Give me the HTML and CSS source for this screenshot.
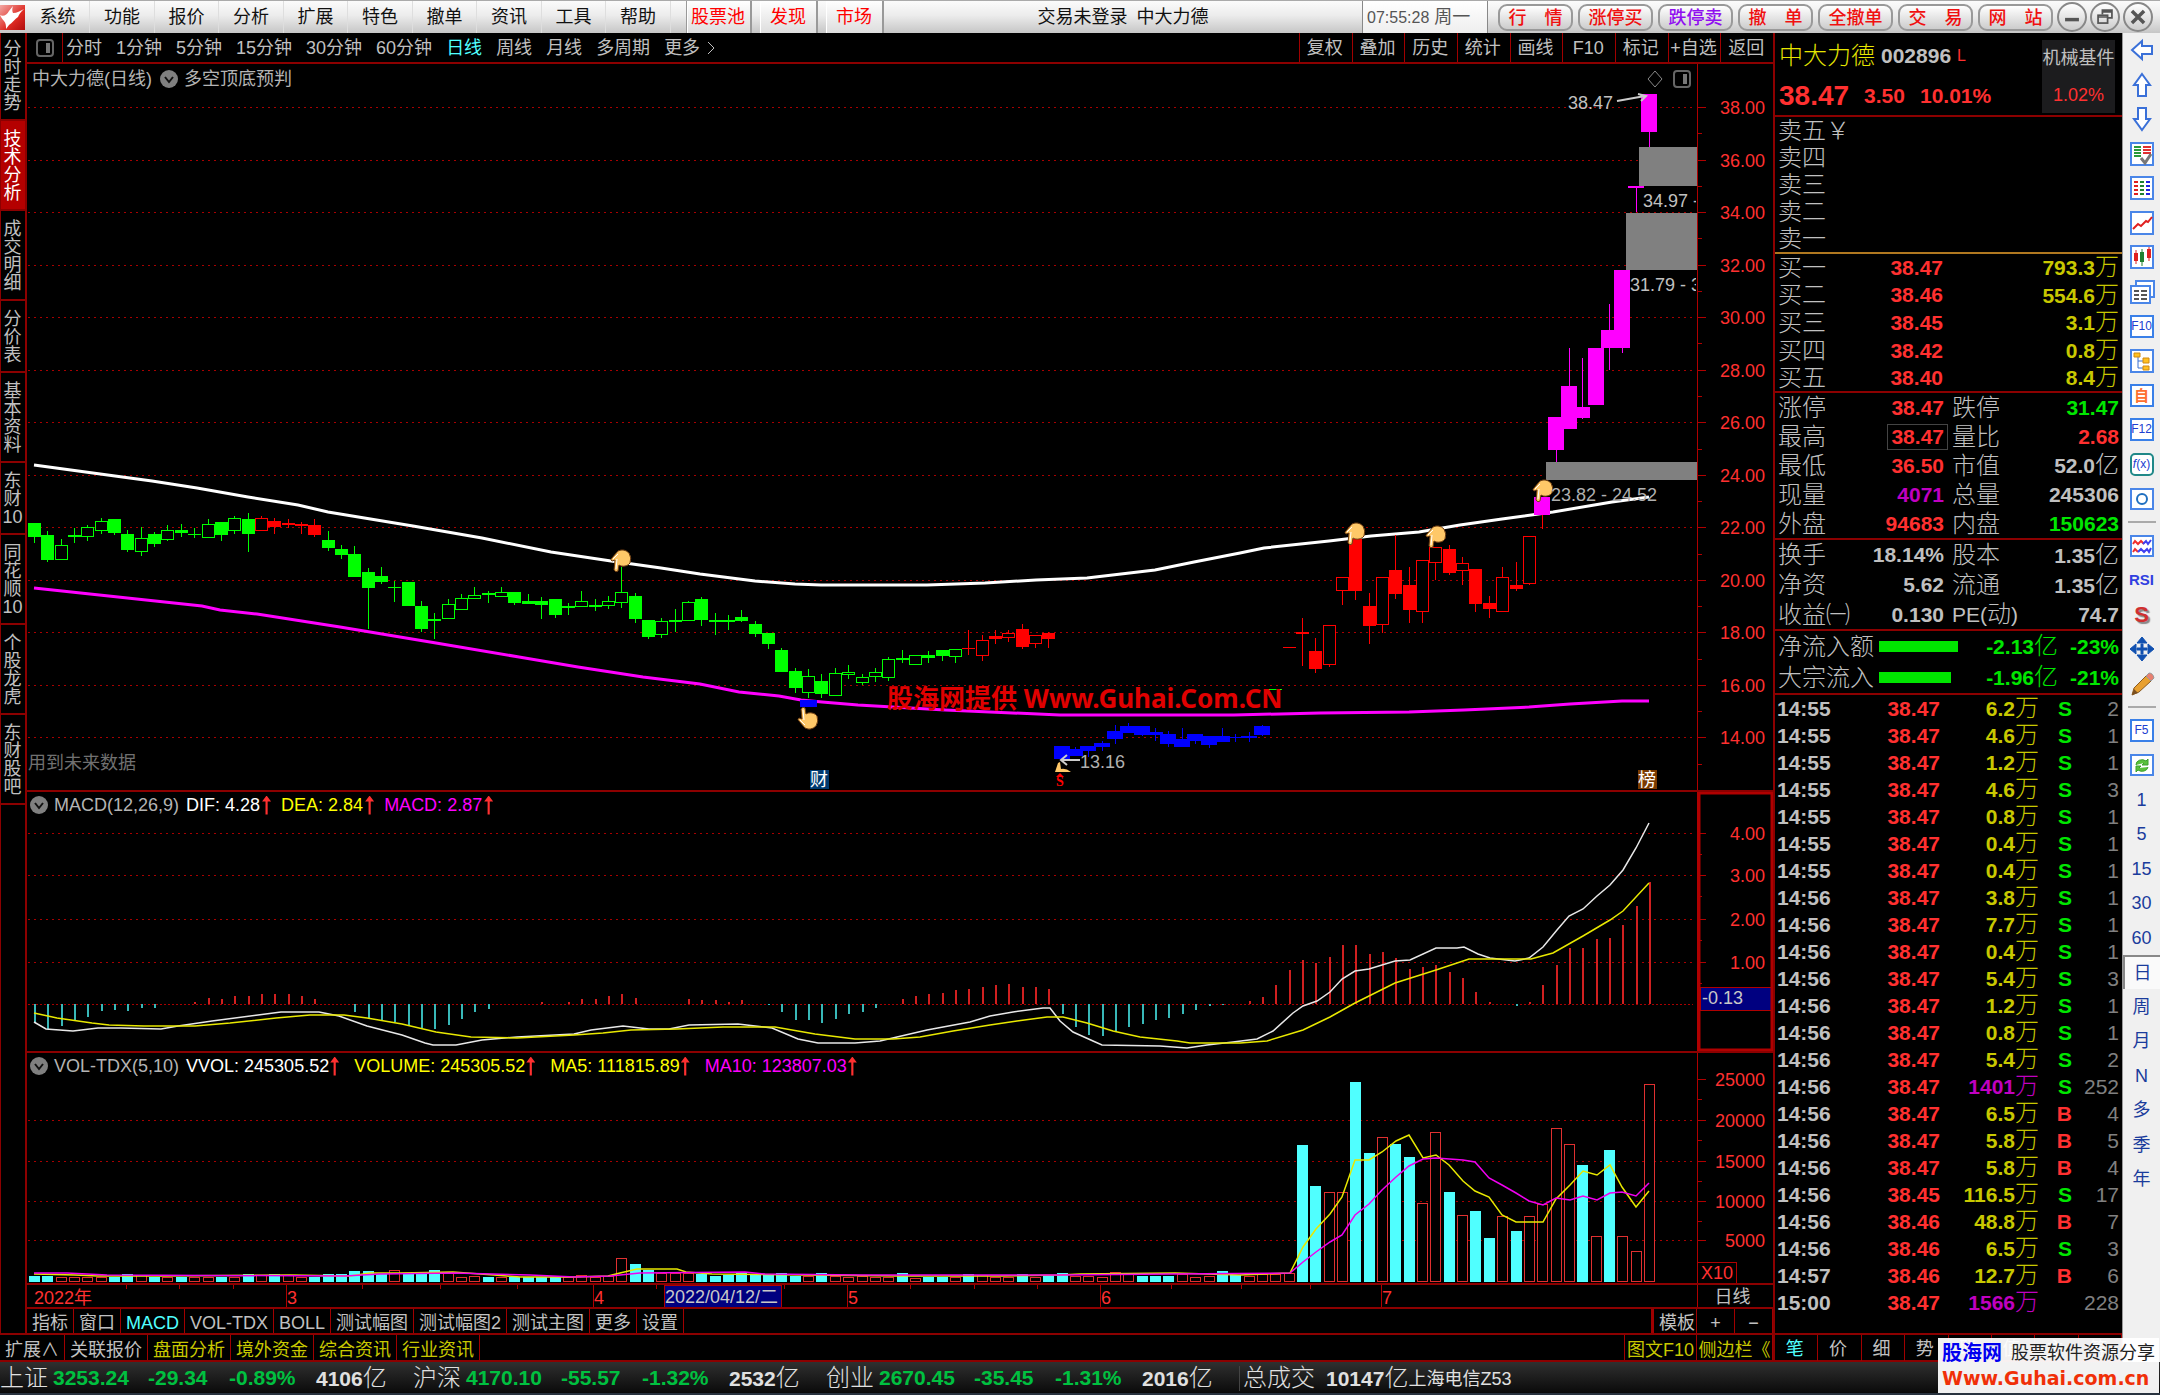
FILE: index.html
```html
<!DOCTYPE html>
<html lang="zh-CN">
<head>
<meta charset="utf-8">
<title>中大力德 002896</title>
<link rel="stylesheet" href="styles.css">
</head>
<body>
<header class="menubar">
  <svg class="logo" viewBox="0 0 25 25" aria-hidden="true"><defs><linearGradient id="lg" x1="0" y1="0" x2="1" y2="1"><stop offset="0" stop-color="#f3a9a4"/><stop offset=".6" stop-color="#dd2a22"/><stop offset="1" stop-color="#b00d0d"/></linearGradient></defs><rect width="25" height="25" fill="url(#lg)"/><path d="M0 10C3 12 7 10 9 6L13 1C12 4 12 6 13 8C17 8 20 6 24 4C21 7 19 9 18 12C15 14 12 18 9 20C8 21 7 23 6 24C6 21 6 18 4 16C2 14 1 12 0 10Z" fill="#fff"/></svg>
  <nav class="menu">
    <button>系统</button><button>功能</button><button>报价</button><button>分析</button><button>扩展</button><button>特色</button><button>撤单</button><button>资讯</button><button>工具</button><button>帮助</button>
  </nav>
  <nav class="hot"><button>股票池</button><button>发现</button><button>市场</button></nav>
  <h1 class="title">交易未登录&ensp;中大力德</h1>
  <time class="clock"><span>07:55:28</span> 周一</time>
  <div class="trade">
    <button>行　情</button><button>涨停买</button><button class="violet">跌停卖</button><button>撤　单</button><button>全撤单</button><button>交　易</button><button>网　站</button>
  </div>
  <div class="winctl">
    <button aria-label="最小化"><svg viewBox="0 0 30 30"><path d="M7 18H23" stroke="#555" stroke-width="4"/></svg></button>
    <button aria-label="还原"><svg viewBox="0 0 30 30" fill="none" stroke="#555" stroke-width="2"><path d="M12 12V7H23V16H18"/><rect x="7" y="13" width="11" height="9"/><path d="M12 9H23M7 15H18"/></svg></button>
    <button aria-label="关闭"><svg viewBox="0 0 30 30"><path d="M8 8L22 22M22 8L8 22" stroke="#555" stroke-width="4"/></svg></button>
  </div>
</header>

<main class="desk">
  <section class="left">
    <div class="work">
      <nav class="side">
        <button>分时走势</button><button class="on">技术分析</button><button>成交明细</button><button>分价表</button><button>基本资料</button><button>东财10</button><button>同花顺10</button><button>个股龙虎</button><button>东财股吧</button>
      </nav>
      <div class="charts">
        <div class="periods">
          <button class="pane" aria-label="布局"><svg viewBox="0 0 18 18"><rect x="1" y="1" width="16" height="16" rx="3" fill="none" stroke="#666" stroke-width="2"/><path d="M10 4H14V14H10Z" fill="#777"/></svg></button>
          <nav class="plist">
            <button>分时</button><button>1分钟</button><button>5分钟</button><button>15分钟</button><button>30分钟</button><button>60分钟</button><button class="on">日线</button><button>周线</button><button>月线</button><button>多周期</button><button>更多<svg viewBox="0 0 10 18"><path d="M2 3L8 9 2 15" fill="none" stroke="#c0c0c0" stroke-width="1"/></svg></button>
          </nav>
          <nav class="tools"><button>复权</button><button>叠加</button><button>历史</button><button>统计</button><button>画线</button><button>F10</button><button>标记</button><button>+自选</button><button>返回</button></nav>
        </div>
        <div class="panel" id="p-main">
          <svg class="plot"></svg>
          <div class="legend">
            <span>中大力德(日线)</span><svg class="drop" viewBox="0 0 18 18"><circle cx="9" cy="9" r="9" fill="#808080"/><path d="M5 7L9 12 13 7" fill="none" stroke="#111" stroke-width="2"/></svg><span>多空顶底预判</span>
            <svg class="rhomb" viewBox="0 0 44 20"><path d="M8 2L15 10 8 18 1 10Z" fill="none" stroke="#888"/><rect x="27" y="2" width="16" height="16" rx="3" fill="none" stroke="#666" stroke-width="2"/><path d="M36 5H40V15H36Z" fill="#777"/></svg>
          </div>
        </div>
        <div class="panel" id="p-macd">
          <svg class="plot"></svg>
          <div class="legend">
            <svg class="drop" viewBox="0 0 18 18"><circle cx="9" cy="9" r="9" fill="#808080"/><path d="M5 7L9 12 13 7" fill="none" stroke="#111" stroke-width="2"/></svg>
            <span>MACD(12,26,9)</span><span class="w up">DIF: 4.28</span><span class="y up">DEA: 2.84</span><span class="m up">MACD: 2.87</span>
          </div>
        </div>
        <div class="panel" id="p-vol">
          <svg class="plot"></svg>
          <div class="legend">
            <svg class="drop" viewBox="0 0 18 18"><circle cx="9" cy="9" r="9" fill="#808080"/><path d="M5 7L9 12 13 7" fill="none" stroke="#111" stroke-width="2"/></svg>
            <span>VOL-TDX(5,10)</span><span class="w up">VVOL: 245305.52</span><span class="y up">VOLUME: 245305.52</span><span class="y up">MA5: 111815.89</span><span class="m up">MA10: 123807.03</span>
          </div>
        </div>
        <div class="panel" id="p-time"><svg class="plot"></svg></div>
        <div class="indic">
          <button>指标</button><button>窗口</button><button class="on">MACD</button><button>VOL-TDX</button><button>BOLL</button><button>测试幅图</button><button>测试幅图2</button><button>测试主图</button><button>更多</button><button>设置</button>
          <span class="fill"></span>
          <button class="tpl">模板</button><button class="zoom">+</button><button class="zoom">−</button>
        </div>
      </div>
    </div>
    <div class="ext">
      <button class="grey">扩展∧</button><button class="grey">关联报价</button><button>盘面分析</button><button>境外资金</button><button>综合资讯</button><button>行业资讯</button>
      <span class="fill"></span>
      <button class="f10">图文F10</button><button class="bar">侧边栏《</button>
    </div>
  </section>

  <aside class="quote">
    <div class="head">
      <div class="name"><h2>中大力德</h2><b>002896</b><sup>L</sup></div>
      <div class="price"><strong>38.47</strong><b>3.50</b><b>10.01%</b></div>
      <div class="trend"><span>机械基件</span><span class="r">1.02%</span></div>
    </div>
    <table class="book sell">
      <tr><th>卖五￥</th></tr><tr><th>卖四</th></tr><tr><th>卖三</th></tr><tr><th>卖二</th></tr><tr><th>卖一</th></tr>
    </table>
    <table class="book buy">
      <tr><th>买一</th><td>38.47</td><td>793.3<i>万</i></td></tr>
      <tr><th>买二</th><td>38.46</td><td>554.6<i>万</i></td></tr>
      <tr><th>买三</th><td>38.45</td><td>3.1<i>万</i></td></tr>
      <tr><th>买四</th><td>38.42</td><td>0.8<i>万</i></td></tr>
      <tr><th>买五</th><td>38.40</td><td>8.4<i>万</i></td></tr>
    </table>
    <table class="stat">
      <tr><th>涨停</th><td class="r">38.47</td><th>跌停</th><td class="g">31.47</td></tr>
      <tr><th>最高</th><td class="r"><span class="boxed">38.47</span></td><th>量比</th><td class="r">2.68</td></tr>
      <tr><th>最低</th><td class="r">36.50</td><th>市值</th><td>52.0<i>亿</i></td></tr>
      <tr><th>现量</th><td class="p">4071</td><th>总量</th><td>245306</td></tr>
      <tr><th>外盘</th><td class="r">94683</td><th>内盘</th><td class="g">150623</td></tr>
    </table>
    <table class="stat fund">
      <tr><th>换手</th><td>18.14%</td><th>股本</th><td>1.35<i>亿</i></td></tr>
      <tr><th>净资</th><td>5.62</td><th>流通</th><td>1.35<i>亿</i></td></tr>
      <tr><th>收益㈠</th><td>0.130</td><th><b>PE(</b>动<b>)</b></th><td>74.7</td></tr>
    </table>
    <table class="flow">
      <tr><th>净流入额</th><td><span class="meter" style="width:79px"></span></td><td>-2.13<i>亿</i></td><td>-23%</td></tr>
      <tr><th>大宗流入</th><td><span class="meter" style="width:72px"></span></td><td>-1.96<i>亿</i></td><td>-21%</td></tr>
    </table>
    <table class="ticks"><tbody id="ticks"></tbody></table>
    <nav class="qtabs"><button class="on">笔</button><button>价</button><button>细</button><button>势</button><button>联</button><button>值</button><button>主</button><button>筹</button></nav>
  </aside>

  <nav class="rail">
    <button aria-label="后退"><svg viewBox="0 0 26 26"><path d="M3 13L13 4V9H23V17H13V22Z" class="arw"/></svg></button>
    <button aria-label="上"><svg viewBox="0 0 26 26"><path d="M13 2L21 13H17V24H9V13H5Z" class="arw"/></svg></button>
    <button aria-label="下"><svg viewBox="0 0 26 26"><path d="M13 24L21 13H17V2H9V13H5Z" class="arw"/></svg></button>
    <button aria-label="委托"><svg viewBox="0 0 26 26"><rect x="2" y="2" width="22" height="22" class="frm"/><path d="M5 6H12M5 9H12M5 12H12M5 15H12" stroke="#2a9a3a" stroke-width="2"/><path d="M14 6H22M14 9H22M14 12H22" stroke="#e03030" stroke-width="2"/><path d="M12 17L16 22 22 13" fill="none" stroke="#777" stroke-width="3"/></svg></button>
    <button aria-label="列表"><svg viewBox="0 0 26 26"><rect x="2" y="2" width="22" height="22" class="frm"/><g stroke-width="2"><path d="M5 7H9M5 11H9M5 15H9M5 19H9" stroke="#e02020"/><path d="M11 7H15M11 11H15M11 15H15M11 19H15" stroke="#208030"/><path d="M17 7H21M17 11H21M17 15H21M17 19H21" stroke="#2020e0"/></g></svg></button>
    <button aria-label="分时图"><svg viewBox="0 0 26 26"><rect x="2" y="2" width="22" height="22" class="frm"/><path d="M4 19L9 14 12 16 17 11 19 12 23 7" fill="none" stroke="#e02020" stroke-width="2"/></svg></button>
    <button aria-label="K线图"><svg viewBox="0 0 26 26"><rect x="2" y="2" width="22" height="22" class="frm"/><path d="M7 6V20M20 3V17" stroke="#e02020"/><path d="M5 9H9V17H5ZM18 5H22V14H18Z" fill="#e02020"/><path d="M13 5V22" stroke="#208030"/><path d="M11 8H15V18H11Z" fill="#208030"/></svg></button>
    <button aria-label="多窗口"><svg viewBox="0 0 26 26"><rect x="7" y="2" width="18" height="16" class="frm"/><rect x="2" y="7" width="19" height="17" class="frm"/><path d="M5 12H10M12 12H18M5 16H10M12 16H18M5 20H10M12 20H18" stroke="#555" stroke-width="2"/></svg></button>
    <button class="key"><span>F10</span></button>
    <button aria-label="结构"><svg viewBox="0 0 26 26"><rect x="2" y="2" width="22" height="22" class="frm"/><path d="M9 9V20H15M9 13H15" fill="none" stroke="#3a70d0"/><path d="M5 5H11V9H5ZM14 10H20V15H14ZM14 18H20V22H14Z" fill="#ffc020" stroke="#d08a10"/></svg></button>
    <button class="key orange"><span>自</span></button>
    <button class="key"><span>F12</span></button>
    <button class="key teal"><span><em>f</em>(x)</span></button>
    <button aria-label="圆"><svg viewBox="0 0 26 26"><rect x="2" y="3" width="22" height="20" class="frm"/><circle cx="13" cy="13" r="5" fill="none" stroke="#2070c0" stroke-width="2"/></svg></button>
    <hr>
    <button aria-label="叠加"><svg viewBox="0 0 26 26"><rect x="2" y="3" width="22" height="20" class="frm"/><path d="M4 11L6 8 9 11 12 8 15 11M4 19L6 16 9 19" fill="none" stroke="#f03030" stroke-width="2"/><path d="M14 11L17 8 19 11 22 7M9 19L12 16 15 19 18 16 20 19 22 15" fill="none" stroke="#4040f0" stroke-width="2"/></svg></button>
    <button class="rsi">RSI</button>
    <button class="dollar">S</button>
    <button aria-label="移动"><svg viewBox="0 0 26 26"><path d="M13 1L18 7H8ZM13 25L18 19H8ZM1 13L7 8V18ZM25 13L19 8V18ZM8 12H18V14H8ZM12 8H14V18H12Z" fill="#1050b0" stroke="#1050b0"/></svg></button>
    <button aria-label="画笔"><svg viewBox="0 0 26 26"><path d="M3 24L5 17 17 5 22 10 10 21Z" fill="#e8a030" stroke="#8a5a20"/><path d="M17 5L20 2Q24 2 25 7L22 10Z" fill="#e88070" stroke="#999"/><path d="M3 24L5 18 9 22Z" fill="#7a5020"/></svg></button>
    <hr>
    <button class="key"><span>F5</span></button>
    <button aria-label="刷新"><svg viewBox="0 0 26 26"><rect x="2" y="3" width="22" height="20" class="frm"/><path d="M7 13A6 5 0 0 1 17 9L19 7V13H13L15 11M19 15A6 5 0 0 1 9 18L7 20V14H12L10 16" fill="#5ac03a" stroke="#3aa02a"/></svg></button>
    <button>1</button><button>5</button><button>15</button><button>30</button><button>60</button><button class="on">日</button><button>周</button><button>月</button><button>N</button><button>多</button><button>季</button><button>年</button>
  </nav>
</main>

<footer class="status">
  <div class="idx"><span>上证</span><b>3253.24</b><b>-29.34</b><b>-0.89%</b><strong>4106<i>亿</i></strong></div>
  <div class="idx"><span>沪深</span><b>4170.10</b><b>-55.57</b><b>-1.32%</b><strong>2532<i>亿</i></strong></div>
  <div class="idx"><span>创业</span><b>2670.45</b><b>-35.45</b><b>-1.31%</b><strong>2016<i>亿</i></strong></div>
  <div class="total"><span>总成交</span><strong>10147<i>亿</i></strong></div>
  <span class="site">上海电信Z53</span>
</footer>
<div class="mark"><p><b>股海网</b><span>股票软件资源分享</span></p><a href="#">Www.Guhai.com.cn</a></div>
<script src="chart.js"></script>
</body>
</html>
```
FILE: styles.css
```css
* { box-sizing: border-box; }
body {
  margin: 0;
  min-height: 100vh;
  display: grid;
  grid-template-rows: 33px 1fr 33px;
  background: #000;
  color: #c0c0c0;
  font: 18px/24px "Liberation Sans", "Noto Sans CJK SC", sans-serif;
  white-space: nowrap;
}
button {
  margin: 0; padding: 0; border: 0; background: none; color: inherit;
  font: inherit; white-space: nowrap; border-radius: 0;
}
h1, h2, p { margin: 0; font-weight: 400; }
i { font-style: normal; font-weight: 300; font-size: 24px; }
.fill { flex: 1; }
.r { color: #ff3030; }
.g { color: #00e600; }
.p { color: #c000c0; }

/* menu bar */
.menubar {
  display: flex; align-items: center;
  background: linear-gradient(#fbfbfb, #ececec 45%, #c6c6c6);
  border-top: 1px solid #aaa;
  color: #111;
}
.logo { width: 25px; height: 25px; margin-right: 1px; }
.menu { display: flex; align-self: stretch; }
.menu button { width: 64px; border-right: 1px solid #dedede; }
.menu button:nth-child(even) { width: 65px; }
.hot { display: flex; align-self: stretch; gap: 8px; margin-left: 15px; border-left: 1px solid #999; }
.hot button { color: #f00; padding: 0 10px 0 9px; border-right: 2px solid #999; border-left: 1px solid #fff; background: linear-gradient(#fff, #ddd); }
.hot button:first-child { padding: 0 5px 0 3px; }
.title { flex: 1; font-size: 18px; text-align: center; }
.clock { width: 126px; align-self: stretch; line-height: 32px; padding-left: 4px; color: #555; border-left: 1px solid #888; border-right: 1px solid #888; background: linear-gradient(#fff, #eee); }
.clock span { font-size: 16px; }
.trade { display: flex; gap: 5px; margin-left: 10px; }
.trade button {
  width: 75px; height: 27px; line-height: 24px; color: #f01010; font-weight: 500;
  border: 2px solid #999; border-radius: 9px; background: linear-gradient(#fff, #ccc);
}
.trade .violet { color: #9010f0; }
.winctl { display: flex; gap: 3px; margin: 0 7px 0 4px; }
.winctl button { width: 30px; height: 30px; border: 2px solid #888; border-radius: 50%; background: linear-gradient(#fff, #ccc); }
.winctl svg { display: block; width: 26px; height: 26px; }

/* page frame */
.desk { display: grid; grid-template-columns: 1fr 350px 37px; min-height: 0; }
.left { display: flex; flex-direction: column; min-width: 0; }
.work { flex: 1; display: grid; grid-template-columns: 27px 1fr; }
.side { display: flex; flex-direction: column; border-right: 2px solid #8c0000; border-left: 1px solid #8c0000; border-bottom: 2px solid #8c0000; }
.side button {
  width: 24px; padding: 9px 2px 7px 1px; line-height: 18px; white-space: normal; word-break: break-all;
  border-bottom: 2px solid #8c0000;
}
.side button:first-child { padding-top: 7px; }
.side .on { background: #b40000; color: #fff; }
.charts { display: grid; grid-template-rows: 31px 728fr 261fr 232fr 24px 26px; min-width: 0; }
.periods { display: flex; border-bottom: 2px solid #8c0000; }
.pane { width: 36px; border-right: 1px solid #a00000; }
.pane svg { display: block; width: 18px; height: 18px; margin: 0 auto; }
.plist { display: flex; gap: 14px; padding-left: 3px; flex: 1; }
.plist .on, .indic .on, .qtabs .on { color: #50ffff; }
.plist svg { width: 10px; height: 18px; margin-left: 6px; vertical-align: -3px; }
.tools { display: grid; grid-template-columns: repeat(9, 1fr); width: 474px; }
.tools button { border-left: 1px solid #a00000; padding-right: 2px; }

/* chart panels: legend and plot share one grid cell */
.panel { display: grid; min-width: 0; border-bottom: 2px solid #8c0000; }
.panel > * { grid-area: 1 / 1; }
.plot { width: 100%; height: 0; min-height: 100%; overflow: hidden; }
.plot text { font-family: "Liberation Sans", "Noto Sans CJK SC", sans-serif; font-size: 18px; }
.plot .wm { font-family: "Noto Sans", "Noto Sans CJK SC", sans-serif; font-weight: 700; font-size: 26px; }
.plot .sell { font-family: "Liberation Serif", serif; font-weight: 700; font-size: 14px; }
.legend { display: flex; align-self: start; align-items: center; height: 26px; padding: 0 82px 0 3px; color: #b4b4b4; }
.drop { width: 18px; height: 18px; margin-right: 6px; }
#p-main .drop { margin: 0 6px 0 8px; }
#p-main .legend { padding-left: 5px; height: 30px; }
.rhomb { width: 44px; height: 20px; margin-left: auto; }
.w { color: #fff; }
.y { color: #ff0; }
.m { color: #f0f; }
.up { margin-left: 7px; display: flex; align-items: center; }
.up + .up { margin-left: 10px; }
#p-vol .up + .up { margin-left: 15px; }
.up::after {
  content: ""; width: 9px; height: 19px; margin-left: 2px; background: #ff3030;
  clip-path: polygon(50% 0, 100% 32%, 62% 32%, 62% 100%, 38% 100%, 38% 32%, 0 32%);
}
#p-vol .up::after { margin-left: 1px; }
.indic, .ext { display: flex; border-bottom: 2px solid #8c0000; }
.indic button { padding: 2px 5px 0; border-right: 1px solid #a00000; }
.indic .tpl { padding: 2px 7px 0 5px; border-left: 3px solid #a00000; width: 46px; }
.indic .zoom { width: 38px; }
.ext { height: 27px; color: #c8c800; }
.ext button { padding: 3px 5px 0; border-right: 1px solid #a00000; }
.ext .grey { color: #c0c0c0; }
.ext .f10 { border-left: 1px solid #a00000; padding: 3px 2px 0; }
.ext .bar { width: 76px; padding: 3px 0 0; }

/* quote panel */
.quote { display: flex; flex-direction: column; border-left: 2px solid #8c0000; border-right: 1px solid #999; }
.head {
  display: grid; grid-template-columns: 1fr 73px; grid-template-rows: 45px 35px; height: 84px;
  padding-right: 7px; border-bottom: 2px solid #8c0000; color: #c0c0c0;
}
.name { display: flex; align-items: center; padding-left: 4px; gap: 6px; }
.name h2 { font-size: 24px; color: #e6e600; font-weight: 300; }
.name b, .price b { font-size: 21px; }
.name sup { color: #ff3030; font-size: 16px; line-height: 16px; }
.price { grid-column: 1; display: flex; align-items: center; gap: 15px; padding-left: 4px; color: #ff3030; }
.price strong { font-size: 28px; }
.trend { grid-column: 2; grid-row: 1 / 3; margin-top: 7px; display: flex; flex-direction: column; justify-content: space-around; text-align: center; background: #1c1c1e; }
table { border-collapse: collapse; table-layout: fixed; width: 100%; font-size: 21px; font-weight: 700; line-height: 24px; }
th { font-size: 24px; font-weight: 300; text-align: left; padding: 0 0 0 3px; }
th b { font-size: 21px; }
td { text-align: right; padding: 0 3px 0 0; }
.book tr { height: 27px; }
.sell { border-bottom: 2px solid #b07820; height: 137px; }
.buy { border-bottom: 2px solid #8c0000; height: 139px; }
.buy th { width: 100px; }
.buy td:nth-child(2) { width: 71px; color: #ff3030; }
.buy td:nth-child(3) { color: #c8c800; }
.stat { border-bottom: 2px solid #8c0000; height: 147px; }
.stat tr, .flow tr { height: 29px; }
.stat th { width: 74px; overflow: visible; }
.stat td:nth-child(2) { width: 98px; }
.fund { height: 91px; }
.fund th { width: 84px; }
.fund td:nth-child(2) { width: 88px; }
.fund th:nth-child(3) { width: 84px; }
.boxed { display: inline-block; margin: 0 -4px 0 0; padding: 0 3px; border: 1px solid #444; }
.stat th:nth-child(3) { padding-left: 5px; }
.flow { border-bottom: 2px solid #8c0000; height: 64px; color: #00e600; }
.flow th { width: 104px; color: #c0c0c0; }
.flow td:nth-child(2) { width: 80px; text-align: left; }
.flow td:nth-child(3) { width: 102px; }
.meter { display: block; height: 11px; background: #00e600; }
.ticks tr { height: 27px; }
.ticks td:nth-child(1) { width: 76px; text-align: left; padding-left: 2px; }
.ticks td:nth-child(2) { width: 92px; color: #ff3030; }
.ticks td:nth-child(3) { width: 99px; color: #c8c800; }
.ticks td:nth-child(4) { width: 33px; }
.ticks td:nth-child(5) { color: #808080; font-weight: 400; }
.ticks td.p { color: #c000c0; }
.qtabs { display: grid; grid-template-columns: repeat(8, 1fr); height: 29px; margin-top: auto; border-top: 2px solid #8c0000; border-bottom: 2px solid #8c0000; }
.qtabs button { border-right: 1px solid #a00000; padding: 2px 3px 0 0; }

/* icon rail */
.rail { display: flex; flex-direction: column; background: #f0f0f0; color: #1a3c9c; }
.rail button { height: 34px; flex: none; display: grid; place-items: center; }
.rail button:nth-child(even) { height: 35px; }
.rail svg { width: 26px; height: 26px; }
.rail hr { width: 28px; height: 2px; margin: 5px auto; border: 0; background: #aaa; }
.arw { fill: #fff; stroke: #3a70d8; stroke-width: 2; }
.frm { fill: #fff; stroke: #4a86e8; stroke-width: 2; }
.key span { width: 24px; height: 23px; border: 2px solid #3a80e8; background: #fff; font-size: 12px; line-height: 19px; color: #2040d0; display: grid; justify-content: center; }
.orange span { color: #ff7030; font-weight: 700; font-size: 15px; }
.teal span { border-color: #208888; border-radius: 5px; display: flex; }
.rail .rsi { font-weight: 700; font-size: 15px; color: #3040e0; }
.rail .dollar { font-weight: 700; font-size: 22px; color: #d03030; text-shadow: 2px 2px 1px #888; }
.rail .on { background: #fafafa; border-left: 2px solid #888; border-top: 2px solid #888; }

/* status bar */
.status { display: flex; align-items: center; padding-top: 2px; background: linear-gradient(#303030, #0a0a0a); border-bottom: 2px solid #28323e; font-size: 21px; color: #e0e0e0; }
.idx { display: grid; grid-template-columns: 53px 95px 81px 87px 97px; }
.idx span, .total span { font-size: 24px; font-weight: 300; }
.idx b { color: #00c040; }
.total { display: flex; gap: 11px; border-left: 1px solid #444; padding-left: 3px; }
.site { font-size: 18px; }

/* brand stamp over the lower right corner */
.mark { position: absolute; right: 1px; bottom: 2px; width: 221px; height: 55px; padding: 3px 4px 0; background: rgba(255, 255, 255, .94); color: #222; }
.mark p { display: flex; justify-content: space-between; font-size: 18px; line-height: 25px; }
.mark b { color: #0000f0; font-size: 20px; }
.mark a { display: block; color: #f03008; text-decoration: none; font: 700 19px/24px "DejaVu Sans", sans-serif; }
```
FILE: chart.js
```js
// Series are stored in the 1671-wide drawing space of the plot; every panel
// scales them to the size it has in the window.
const LEFT = 27, PLOT = 1671, AXIS = 75, STEP = 13.347, FIRST = 34;
const RED = '#b00000', LABEL = '#ff3030';

// kind, high, body top, body bottom, low
// G/H green solid/hollow, R/O red solid/hollow, B blue, M magenta
const candles = `G523,523,537,543 G531,535,560,562 H539,545,559,559 G528,535,537,543 H525,527,536,541 H518,521,530,534
G519,519,533,535 G530,534,550,552 H527,538,551,556 G532,534,544,547 H525,530,539,541 G524,530,533,537 G528,534,535,538
H519,524,537,537 G522,522,535,541 H516,518,530,534 G513,519,534,552 O516,518,530,530 R518,521,527,534 R519,523,525,528
R522,524,526,534 R519,525,535,537 G531,540,548,551 G545,549,555,559 G546,554,577,577 G568,572,588,629 G567,576,582,584
G581,587,588,602 G582,582,606,606 G601,606,629,632 G613,619,621,639 H599,604,618,618 H594,598,609,609 H587,595,598,598
G591,593,595,603 H587,592,596,596 G592,592,603,605 G594,601,604,604 G597,601,605,619 G599,599,615,618 G603,606,608,615
H591,601,606,606 G599,605,607,611 H596,601,605,609 H567,592,602,608 G593,596,619,623 G620,620,637,639 H618,621,634,638
G609,620,622,632 H601,602,620,620 G597,599,620,626 G613,620,622,635 G615,620,622,630 G610,617,621,622 G621,624,634,637
G633,633,644,649 G648,650,672,672 G668,671,688,693 H669,676,692,698 G674,681,694,698 H668,673,695,695 H665,672,674,679
H674,677,682,685 H668,672,676,682 H657,659,677,681 G650,658,660,663 H655,655,664,664 G651,655,658,663 G650,650,656,661
H649,649,656,663 R630,648,649,655 O635,640,655,661 R630,636,639,644 O630,633,637,642 R624,629,647,649 O635,635,643,648
R632,633,639,648 B746,746,759,759 B747,749,756,756 B746,746,751,757 B741,743,747,751 B725,731,739,744 B723,726,733,733
B726,726,735,736 B728,732,735,741 B731,734,744,747 B728,739,747,747 B734,734,741,744 B736,736,745,748 B728,736,742,742
B734,737,738,742 B732,736,738,742 B725,726,735,736 G689,689,690,690 R647,647,648,648 R618,632,634,666 R638,651,669,673
O625,625,664,667 O577,577,590,605 R539,539,591,600 R593,606,626,644 O577,577,624,633 R535,570,594,599 R567,585,610,623
O560,560,611,623 O547,547,562,580 R545,549,573,575 O557,563,570,585 R569,569,604,612 R596,603,609,618 O567,577,611,611
R562,585,589,591 O536,536,583,585 M497,497,515,529 M417,417,450,462 M348,386,429,429 M358,407,418,419 M348,348,405,405
M304,330,348,370 M270,270,348,353 M186,186,188,212 M94,94,132,147`.split(/\s+/).map(s => [s[0], ...s.slice(1).split(',').map(Number)]);

const upper = '34,465 115,476 152,481 197,488 248,497 298,505 328,512 413,526 482,538 551,552 611,561 661,568 700,574 755,581 795,584 821,585 927,585 985,583 1036,580 1087,578 1155,570 1194,562 1240,553 1264,548 1329,541 1371,536 1419,532 1460,525 1502,519 1553,512 1612,502 1649,497';
const lower = '34,588 202,606 220,610 257,614 340,627 436,643 519,657 578,667 643,677 700,684 739,692 779,696 801,700 822,702 858,705 945,710 1060,715 1234,715 1320,713 1409,712 1464,710 1529,707 1570,704 1622,701 1649,701';

const macd = [-19,-25,-22,-17,-13,-7,-6,-7,-4,-4,0,0,2,6,5,8,8,10,10,10,8,5,0,0,-8,-14,-16,-18,-21,-24,
  -25,-21,-15,-8,-5,0,0,0,2,0,2,5,5,8,10,6,0,0,0,5,4,4,2,4,0,-1,-8,-16,-16,-19,-15,-10,-8,-4,0,5,8,10,11,14,
  15,17,19,20,17,17,15,-10,-23,-31,-32,-27,-23,-20,-16,-14,-10,-6,-2,-1,0,3,7,19,34,44,41,47,59,59,
  50,52,46,35,37,39,32,26,12,2,0,-2,2,19,39,56,56,65,66,79,98,122];
const dif = '34,1022 46,1029 73,1031 98,1028 121,1028 161,1029 178,1026 212,1021 258,1015 281,1012 319,1012 339,1016 367,1026 402,1035 425,1043 433,1045 456,1045 482,1040 517,1037 574,1034 591,1030 623,1026 649,1029 669,1029 689,1025 738,1024 772,1028 798,1039 818,1043 855,1043 880,1041 897,1037 927,1030 970,1022 990,1016 1013,1012 1043,1008 1050,1008 1060,1021 1073,1032 1093,1041 1102,1045 1160,1046 1187,1048 1207,1045 1233,1042 1257,1039 1273,1031 1293,1013 1303,1006 1317,1001 1330,992 1342,979 1355,971 1369,969 1395,961 1410,960 1436,948 1457,948 1464,947 1478,954 1490,958 1515,961 1529,958 1543,947 1557,930 1569,916 1583,909 1597,896 1610,885 1623,870 1636,848 1649,823';
const dea = '34,1013 57,1018 92,1023 109,1025 144,1026 195,1026 230,1023 276,1018 310,1015 344,1015 367,1018 402,1024 436,1032 471,1037 517,1038 574,1035 603,1033 631,1030 677,1029 723,1027 775,1027 815,1034 855,1039 893,1039 920,1037 953,1031 990,1025 1017,1021 1047,1017 1063,1017 1087,1023 1113,1031 1140,1037 1177,1041 1190,1043 1240,1043 1267,1041 1303,1030 1330,1017 1355,1003 1395,983 1436,970 1469,959 1531,959 1553,953 1583,936 1610,920 1623,911 1649,883';

// c solid cyan, r hollow red, then the height of the bar
const volume = ('c6 c6 r5 r5 r5 r5 c5 c8 r7 c5 r5 c5 r5 r5 c5 r5 c8 r7 c8 r7 r5 c5 c8 c8 c11 c11 c8 r12 c9 c9 c12 r9 r5 r6 c5 r5 c5 c5 c5 c5 r5 r7 r5 r6 r24 c18 c12 r9 r9 r9 c8 c6 c7 c9 c7 c7 c9 c6 r6 c9 r6 r5 r6 r5 r5 c9 r4 c5 c5 r5 c8 r7 r5 r5 c8 r5 c7 c9 r6 r6 r5 r10 r8 c6 c6 c6 r8 r5 r6 c11 c7 r6 r8 r8 r9 ' +
  'c137 c96 r90 r90 c200 c129 r145 c138 c125 r79 r150 c90 r67 c71 c44 r66 c51 r66 r78 r154 r138 c117 r46 c132 r46 r31 r198').split(' ');
const ma5 = '34,1274 75,1275 98,1276 160,1276 290,1275 350,1276 370,1273 400,1273 453,1272 494,1275 520,1277 574,1277 608,1276 620,1273 637,1269 677,1269 686,1272 712,1274 804,1275 900,1276 1000,1276 1060,1275 1080,1274 1175,1273 1240,1275 1290,1273 1303,1247 1316,1229 1330,1214 1342,1197 1355,1160 1369,1160 1382,1152 1396,1141 1409,1135 1423,1158 1436,1155 1449,1165 1463,1181 1475,1191 1489,1197 1502,1215 1516,1222 1543,1222 1556,1199 1570,1185 1583,1171 1597,1175 1610,1165 1622,1187 1636,1207 1649,1191';
const ma10 = '34,1273 67,1273 107,1275 345,1276 380,1274 455,1273 530,1275 575,1277 610,1276 640,1273 745,1272 765,1274 860,1275 1060,1275 1170,1274 1290,1273 1303,1262 1316,1252 1330,1242 1342,1235 1355,1215 1369,1204 1382,1190 1396,1177 1409,1166 1423,1159 1436,1158 1463,1160 1475,1162 1489,1178 1502,1185 1516,1193 1529,1201 1543,1205 1556,1198 1570,1200 1583,1196 1597,1200 1610,1193 1622,1192 1636,1196 1649,1183';

function panel(id, top, height) {
  const box = document.getElementById(id), svg = box.querySelector('.plot');
  const W = box.clientWidth, H = box.clientHeight, P = W - AXIS, full = box.offsetHeight;
  svg.setAttribute('viewBox', `0 0 ${W} ${H}`);
  const out = [];
  const x = v => Math.round((v - LEFT) * P / PLOT), y = v => Math.round((v - top) * full / height);
  const c = {
    W, H, P, x, y,
    cx: i => x(FIRST + i * STEP),
    add: s => out.push(s),
    rect: (l, t, w, h, fill, stroke) => out.push(`<rect x="${stroke ? l + .5 : l}" y="${stroke ? t + .5 : t}" width="${w}" height="${h}" fill="${fill}"${stroke ? ` stroke="${stroke}"` : ''} shape-rendering="crispEdges"/>`),
    text: (tx, ty, s, fill, anchor = 'start', cls = '') => out.push(`<text x="${tx}" y="${ty}" fill="${fill}" text-anchor="${anchor}" class="${cls}">${s}</text>`),
    line: (pts, color, w) => out.push(`<polyline fill="none" stroke="${color}" stroke-width="${w}" points="${pts.split(' ').map(p => { const [a, b] = p.split(','); return x(+a) + ',' + y(+b); }).join(' ')}"/>`),
    grid: (v, label, dash = '2 4') => {
      const g = y(v) + .5;
      if (dash) out.push(`<path d="M1 ${g}H${P - 5}" stroke="#a80000" stroke-dasharray="${dash}" shape-rendering="crispEdges"/>`);
      if (label) { c.rect(P, g - .5, 8, 1, RED); c.text(W - 8, g + 6, label, LABEL, 'end'); }
    },
    minor: v => c.rect(P, y(v), 4, 1, RED),
    done: () => { svg.innerHTML = out.join(''); }
  };
  return c;
}

function hand(c, px, py, up) {
  const flip = up ? `translate(${c.x(px)} ${c.y(py)}) scale(1 -1) translate(0 -21)` : `translate(${c.x(px)} ${c.y(py)})`;
  c.add(`<g transform="${flip}"><path d="M-3 1Q3-2 8 3Q11 8 9 13Q6 17 0 16L-2 15-3 21Q-5 23-7 20L-6 10-9 11Q-11 10-9 8Z" fill="#ffc868" stroke="#6a3a10"/><path d="M-3 4L-8 9M-4 9L-5 19" stroke="#fff"/></g>`);
}

function drawMain() {
  const c = panel('p-main', 64, 728), { x, y, P } = c;
  for (let p = 38; p >= 14; p -= 2) {
    c.grid(107 + (38 - p) * 26.27, p.toFixed(2));
    c.minor(107 + (39 - p) * 26.27);
  }
  c.rect(P - 1, 0, 1, c.H, RED);
  [[1639, 147, 39], [1626, 213, 57], [1546, 462, 18]].forEach(([l, t, h]) => c.rect(x(l), y(t), P - 1 - x(l), y(t + h) - y(t), '#808080'));
  c.line(upper, '#fff', 3);
  c.line(lower, '#f0f', 3);
  const paint = { G: '#0f0', H: '#0f0', R: '#f00', O: '#f00', B: '#00f', M: '#f0f' };
  candles.forEach(([k, h, t, b, l], i) => {
    const m = c.cx(i), col = paint[k], wide = k === 'B' || k === 'M';
    const y1 = y(t), hgt = Math.max(1, y(b) - y1);
    c.rect(m, y(h), 1, y(l) - y(h), k === 'M' && i === 113 ? '#f00' : col);
    if (k === 'H' || k === 'O') c.rect(m - 6, y1, 12, hgt, '#000', col);
    else c.rect(m - (wide ? 8 : 6), y1, wide ? 16 : 13, hgt, col);
  });
  c.rect(x(800), y(700), 17, 7, '#00f');
  hand(c, 621, 550); hand(c, 1355, 523); hand(c, 1436, 526); hand(c, 1543, 480);
  hand(c, 808, 708, true);
  c.add(`<g transform="translate(${x(1060)} ${y(760)})"><path d="M-2 3L0 2 1 9Q6 8 11 12H-5Z" fill="#ffc868"/><path d="M20 0H1M7-5L1 0 7 5" stroke="#ccc" fill="none" stroke-width="2"/><path d="M0 13L4 17H-4Z" fill="#f00"/></g>`);
  c.text(x(1060), y(786), 'S', '#f00', 'middle', 'sell');
  c.text(x(1080), y(768), '13.16', '#b0b0b0');
  c.text(x(1613), y(109), '38.47', '#c0c0c0', 'end');
  c.add(`<path d="M${x(1617)} ${y(101)}L${x(1645)} ${y(96)}M${x(1638)} ${y(94)}L${x(1646)} ${y(96)} ${x(1641)} ${y(101)}" stroke="#ccc" fill="none" stroke-width="2"/>`);
  c.add(`<clipPath id="plotclip"><path d="M0 0H${P - 2}V${c.H}H0Z"/></clipPath><g clip-path="url(#plotclip)">`);
  c.text(x(1643), y(207), '34.97 - 36.50', '#c0c0c0');
  c.text(x(1630), y(291), '31.79 - 33.98', '#c0c0c0');
  c.add('</g>');
  c.text(x(1551), y(501), '23.82 - 24.52', '#b0b0b0');
  c.text(x(28), y(769), '用到未来数据', '#707070');
  c.rect(x(810), y(770), 19, 19, '#003a70');
  c.text(x(810), y(786), '财', '#fff');
  c.rect(x(1638), y(770), 19, 19, '#7a3a00');
  c.text(x(1638), y(786), '榜', '#fff');
  c.text(x(887), y(708), '股海网提供 Www.Guhai.Com.CN', '#e00000', 'start', 'wm');
  c.done();
}

function drawMacd() {
  const c = panel('p-macd', 792, 261), { y, P } = c;
  [[833, '4.00'], [875, '3.00'], [919, '2.00'], [962, '1.00']].forEach(([v, s]) => { c.grid(v, s); c.minor(v + 21); });
  c.grid(1004, '', '2 2');
  macd.forEach((v, i) => {
    const s = y(792 + Math.abs(v)), z = y(1004);
    if (v > 0) c.rect(c.cx(i), z - s, 2, s, '#d02020');
    else if (v < 0) c.rect(c.cx(i), z, 2, s, '#38b8b8');
  });
  c.line(dif, '#e8e8e8', 1.5);
  c.line(dea, '#e8e800', 1.5);
  c.rect(P - 1, 0, 1, c.H, RED);
  c.rect(P + 2, y(987), AXIS - 4, y(1010) - y(987), '#000080', RED);
  c.text(P + 4, y(1004), '-0.13', '#c8c8c8');
  c.add(`<rect x="${P + 1}" y="1" width="${AXIS - 2}" height="${c.H - 2}" fill="none" stroke="#b00000" stroke-width="3"/>`);
  c.done();
}

function drawVol() {
  const c = panel('p-vol', 1053, 232), { y, P } = c;
  [[1079, '25000'], [1120, '20000'], [1161, '15000'], [1201, '10000'], [1240, '5000']].forEach(([v, s], i) => { c.grid(v, s, i ? '2 4' : ''); if (i < 4) c.minor(v + 20); });
  volume.forEach((s, i) => {
    const h = y(1053 + Number(s.slice(1))), m = c.cx(i), b = y(1282);
    if (s[0] === 'c') c.rect(m - 5, b - h, 11, h, '#50ffff');
    else c.rect(m - 5, b - h, 10, h - 1, '#000', '#e03030');
  });
  c.line(ma5, '#e8e800', 1.5);
  c.line(ma10, '#f000f0', 1.5);
  c.rect(P - 1, 0, 1, c.H, RED);
  c.rect(P - 1, y(1262), 39, 22, 'none', RED);
  c.text(P + 3, y(1279), 'X10', LABEL);
  c.done();
}

function drawTime() {
  const c = panel('p-time', 1285, 24), { x, P } = c;
  [126, 179, 233, 362, 440, 517, 656, 784, 910, 974, 1037, 1171, 1241, 1310].forEach(t => c.rect(x(t), 0, 1, 4, RED));
  [[286, 3], [593, 4], [847, 5], [1100, 6], [1381, 7]].forEach(([t, s]) => { c.rect(x(t), 0, 1, c.H, RED); c.text(x(t) + 1, 19, s, LABEL); });
  c.text(x(34), 19, '2022年', LABEL);
  c.rect(x(664), 0, 117, c.H, '#000080', RED);
  c.text(x(665), 18, '2022/04/12/二', '#c8c8c8');
  c.rect(P - 1, 0, 1, c.H, RED);
  c.text(P + AXIS / 2 - 3, 18, '日线', '#c0c0c0', 'middle');
  c.done();
}

function draw() { drawMain(); drawMacd(); drawVol(); drawTime(); }

// time, price, amount, side, lots
const ticks = `14:55 38.47 6.2 S 2|14:55 38.47 4.6 S 1|14:55 38.47 1.2 S 1|14:55 38.47 4.6 S 3|14:55 38.47 0.8 S 1|14:55 38.47 0.4 S 1|14:55 38.47 0.4 S 1|14:56 38.47 3.8 S 1|14:56 38.47 7.7 S 1|14:56 38.47 0.4 S 1|14:56 38.47 5.4 S 3|14:56 38.47 1.2 S 1|14:56 38.47 0.8 S 1|14:56 38.47 5.4 S 2|14:56 38.47 1401 S 252|14:56 38.47 6.5 B 4|14:56 38.47 5.8 B 5|14:56 38.47 5.8 B 4|14:56 38.45 116.5 S 17|14:56 38.46 48.8 B 7|14:56 38.46 6.5 S 3|14:57 38.46 12.7 B 6|15:00 38.47 1566 - 228`;
document.getElementById('ticks').innerHTML = ticks.split('|').map(r => {
  const [t, p, a, s, n] = r.split(' ');
  return `<tr><td>${t}</td><td>${p}</td><td class="${+a > 1000 ? 'p' : ''}">${a}<i>万</i></td><td class="${s === 'S' ? 'g' : 'r'}">${s === '-' ? '' : s}</td><td>${n}</td></tr>`;
}).join('');

draw();
addEventListener('resize', draw);
```
